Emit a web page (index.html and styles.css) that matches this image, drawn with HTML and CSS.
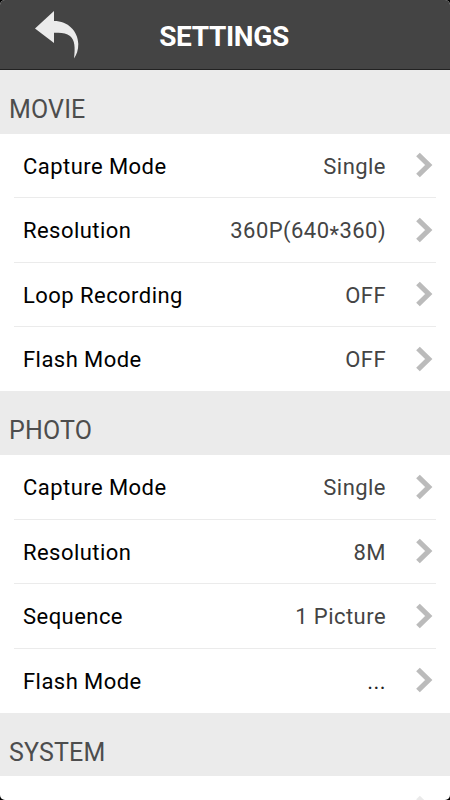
FILE: index.html
```html
<!DOCTYPE html>
<html lang="en">
<head>
  <meta charset="UTF-8">
  <title>Settings</title>
  <link rel="stylesheet" href="styles.css">
</head>
<body>
  <svg class="defs" width="0" height="0">
    <symbol id="chevron" viewBox="0 0 18 26">
      <path d="M3 2.5 L13.7 13 L3 23.5" fill="none" stroke="#bbb" stroke-width="5.2"/>
    </symbol>
  </svg>

  <div class="screen">
    <header class="topbar">
      <svg class="back" viewBox="0 0 46 50">
        <path d="M1 18.5 L20 1 V11 C34 11 44 21 44.3 34 C44.4 40 42.5 45 40 48.5 C41.3 38 41 30 36 26 C32 22.8 27 22.3 20 22.8 V33 Z" fill="#ebebeb"/>
      </svg>
      <h1>SETTINGS</h1>
    </header>

    <h2>MOVIE</h2>
    <ul class="list">
      <li><span class="label">Capture Mode</span><span class="value">Single</span><svg class="arrow"><use href="#chevron"/></svg></li>
      <li><span class="label">Resolution</span><span class="value">360P(640<span class="star">*</span>360)</span><svg class="arrow"><use href="#chevron"/></svg></li>
      <li><span class="label">Loop Recording</span><span class="value">OFF</span><svg class="arrow"><use href="#chevron"/></svg></li>
      <li><span class="label">Flash Mode</span><span class="value">OFF</span><svg class="arrow"><use href="#chevron"/></svg></li>
    </ul>

    <h2>PHOTO</h2>
    <ul class="list">
      <li><span class="label">Capture Mode</span><span class="value">Single</span><svg class="arrow"><use href="#chevron"/></svg></li>
      <li><span class="label">Resolution</span><span class="value">8M</span><svg class="arrow"><use href="#chevron"/></svg></li>
      <li><span class="label">Sequence</span><span class="value">1 Picture</span><svg class="arrow"><use href="#chevron"/></svg></li>
      <li><span class="label">Flash Mode</span><span class="value dots">...</span><svg class="arrow"><use href="#chevron"/></svg></li>
    </ul>

    <h2>SYSTEM</h2>
    <ul class="list">
      <li><svg class="arrow faded"><use href="#chevron"/></svg></li>
    </ul>
  </div>
</body>
</html>
```
FILE: styles.css
```css
body {
  margin: 0;
  background: #000;
  font-family: Roboto, "Liberation Sans", sans-serif;
}

.defs {
  display: block;
}

.screen {
  height: 800px;
  overflow: hidden;
  background: #fff;
  border-radius: 5px;
}

.topbar {
  box-sizing: border-box;
  display: grid;
  align-items: center;
  height: 70px;
  background: #444;
  border-bottom: 1px solid #222;
}

.topbar > * {
  grid-area: 1 / 1;
}

.back {
  width: 46px;
  height: 50px;
  margin-left: 34px;
}

h1 {
  margin: 4px 2px 0 0;
  text-align: center;
  font-size: 28px;
  font-weight: 700;
  line-height: 34px;
  letter-spacing: -0.35px;
  color: #fff;
}

h2 {
  box-sizing: border-box;
  height: 63.5px;
  margin: 0;
  padding: 24px 0 0 9px;
  background: #ebebeb;
  font-size: 25px;
  font-weight: 400;
  line-height: 32px;
  letter-spacing: 0.15px;
  color: #4d4d4d;
}

.list {
  margin: 0;
  padding: 0 14px;
  list-style: none;
}

.list li {
  box-sizing: border-box;
  display: flex;
  align-items: center;
  height: 64.6px;
  padding: 2px 3px 0 9px;
  border-bottom: 1px solid #ebebeb;
  font-size: 22px;
  letter-spacing: 0.45px;
}

.list li:last-child {
  height: 64.2px;
  border-bottom-color: transparent;
}

.label {
  color: #000;
}

.value {
  margin-left: auto;
  color: #444;
}

.arrow {
  width: 18px;
  height: 26px;
  margin: 0 0 2px 29px;
}

.star {
  line-height: 0;
  vertical-align: -4px;
}

.dots {
  color: #222;
}

.faded {
  margin-left: auto;
  opacity: 0.3;
}
```
